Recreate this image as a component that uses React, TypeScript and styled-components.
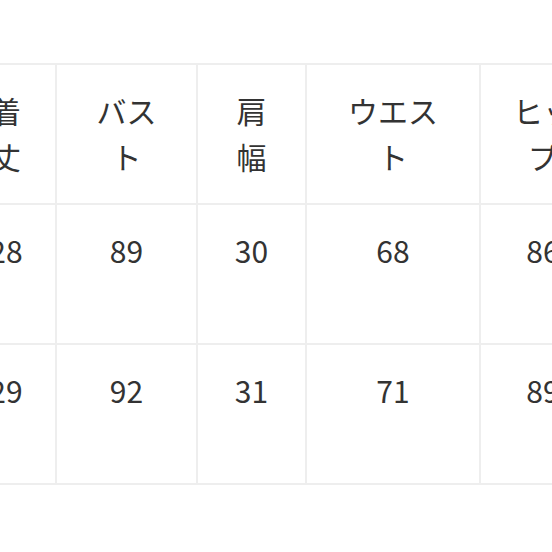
import React from "react";
import styled, { createGlobalStyle } from "styled-components";

const columns = [
  { key: "length", label: "着丈", width: 98 },
  { key: "bust", label: "バスト", width: 139 },
  { key: "shoulder", label: "肩幅", width: 107 },
  { key: "waist", label: "ウエスト", width: 172 },
  { key: "hip", label: "ヒップ", width: 124 },
];

const rows = [
  { length: "28", bust: "89", shoulder: "30", waist: "68", hip: "86" },
  { length: "29", bust: "92", shoulder: "31", waist: "71", hip: "89" },
];

const GlobalStyle = createGlobalStyle`
  html, body {
    margin: 0;
    padding: 0;
    background: #ffffff;
  }
  body {
    font-family: "Noto Sans CJK JP", "Noto Sans", sans-serif;
  }
`;

const Page = styled.div`
  width: 552px;
  height: 552px;
  overflow: hidden;
  padding-top: 63px;
  box-sizing: border-box;
`;

const Table = styled.div<{ $template: string }>`
  display: grid;
  grid-template-columns: ${(p) => p.$template};
  grid-auto-rows: 138px;
  gap: 2px;
  padding: 2px;
  width: max-content;
  margin-left: -45px;
  background: #eeeeee;
`;

const Cell = styled.div`
  background: #ffffff;
  padding: 22px 30px 0;
  box-sizing: border-box;
  text-align: center;
  font-size: 30px;
  line-height: 46px;
  color: #333333;
  word-break: break-all;
`;

const App: React.FC = () => {
  const template = columns.map((c) => `${c.width}px`).join(" ");
  return (
    <>
      <GlobalStyle />
      <Page>
        <Table $template={template}>
          {columns.map((col) => (
            <Cell key={col.key}>{col.label}</Cell>
          ))}
          {rows.map((row, i) =>
            columns.map((col) => (
              <Cell key={`${i}-${col.key}`}>
                {row[col.key as keyof typeof row]}
              </Cell>
            ))
          )}
        </Table>
      </Page>
    </>
  );
};

export default App;
